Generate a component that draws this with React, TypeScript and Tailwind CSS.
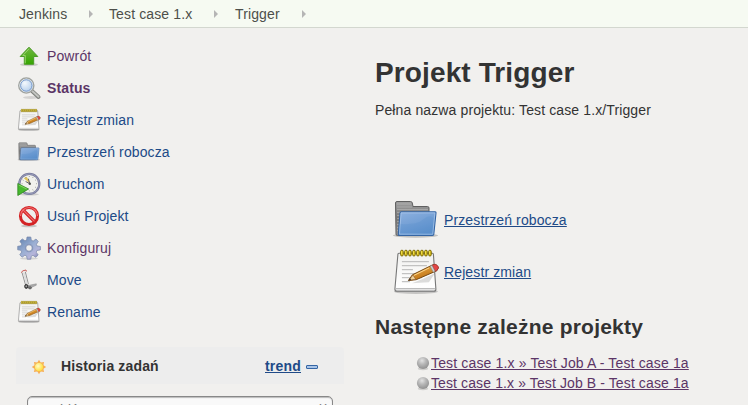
import React from "react";

type IconProps = { size?: number };

function UpArrow() {
  return (
    <svg width="24" height="24" viewBox="0 0 24 24">
      <defs>
        <linearGradient id="up" x1="0" y1="0" x2="0" y2="1"><stop offset="0" stopColor="#73b844" /><stop offset="1" stopColor="#35a500" /></linearGradient>
      </defs>
      <ellipse cx="12" cy="20.7" rx="9" ry="1.6" fill="#000" opacity=".16" />
      <path d="M12 3.2 3.2 12.5H7.3V20.3H16.7V12.5H20.8Z" fill="url(#up)" stroke="#4b9b27" strokeWidth="1" strokeLinejoin="round" />
      <path d="M12 4.9 5.8 11.5H8.3V19.3" fill="none" stroke="#a6da7a" strokeWidth=".8" />
    </svg>
  );
}

function Search() {
  return (
    <svg width="24" height="24" viewBox="0 0 24 24">
      <defs>
        <radialGradient id="lens" cx=".4" cy=".35" r=".75"><stop offset="0" stopColor="#f4f9fd" /><stop offset="1" stopColor="#a3c2e6" /></radialGradient>
      </defs>
      <ellipse cx="14" cy="21.5" rx="8" ry="1.4" fill="#000" opacity=".12" />
      <path d="m15 15 6.5 6" stroke="#7f827d" strokeWidth="3.8" strokeLinecap="round" />
      <path d="m15 14.8 6.5 5.9" stroke="#c3c5c1" strokeWidth="2" strokeLinecap="round" />
      <circle cx="9.3" cy="9.5" r="7.5" fill="url(#lens)" stroke="#a0a39f" strokeWidth="1.5" />
      <circle cx="9.3" cy="9.5" r="6.4" fill="none" stroke="#e7e9e6" strokeWidth=".9" />
      <circle cx="9.3" cy="9.5" r="5.7" fill="none" stroke="#6d92c8" strokeWidth=".9" />
    </svg>
  );
}

function Notepad({ size = 24 }: IconProps) {
  return (
    <svg width={size} height={size} viewBox="0 0 48 48">
      <defs>
        <linearGradient id="paper" x1="0" y1="0" x2="0" y2="1"><stop offset="0" stopColor="#f1f1ef" /><stop offset=".9" stopColor="#fff" /><stop offset="1" stopColor="#ccc" /></linearGradient>
        <linearGradient id="pencil" x1="0" y1="0" x2=".5" y2="1"><stop offset="0" stopColor="#f5b955" /><stop offset="1" stopColor="#ba6c0d" /></linearGradient>
      </defs>
      <g transform="translate(.9 .2)">
        <ellipse cx="23" cy="43.3" rx="22" ry="2.5" fill="#000" opacity=".18" />
        <path d="M6 5H39.5Q40.5 5 40.5 6L43 41Q43 43 41 43H4Q2 43 2 41L5 6Q5 5 6 5Z" fill="url(#paper)" stroke="#777" strokeWidth="1.1" />
        <path d="M3 40.3H42" stroke="#bbb" strokeWidth="1" />
        <path d="M9 13.5H36M9 17.5H34M9 21.5H20M9 25.5H32M9 29.5H29M9 33.5H17" stroke="#b5b5b5" strokeWidth="1" />
        {[9, 13, 17, 21, 25, 29, 33, 37].map((x) => (
          <g key={x}><rect x={x - 1.3} y="2" width="2.7" height="5.8" rx="1.3" fill="#d6bd20" stroke="#786600" strokeWidth=".9" /><path d={`M${x - 0.4} 3V6`} stroke="#fff15a" strokeWidth=".7" /></g>
        ))}
        <path d="M19 35Q30 31 42 25L36 34Z" fill="#000" opacity=".13" />
        <path d="m15.5 32.3 4-5.7L39.5 16.8Q43.5 15 45.5 19.3L44 22.5 23.3 31.5Z" fill="url(#pencil)" stroke="#784c17" />
        <path d="m20 26.8 2.8 4.2-6.8 1.1Z" fill="#edd09c" stroke="#805326" strokeWidth=".5" />
        <path d="m15.5 32.3 1.6-2.3 1.2 1.7Z" fill="#333" />
        <path d="m39.3 17 2-.8Q44.5 15.8 45.6 19.8L44 22.3 42 23.1Z" fill="#e44646" stroke="#9d3332" strokeWidth=".7" />
        <path d="m37.1 17.8 3.2 6.2 1.9-.9-3.1-6.1Z" fill="#d1d1d1" stroke="#777" strokeWidth=".5" />
        <path d="m21 27.2 15.3-7.5" stroke="#ffd98f" strokeWidth="1" />
      </g>
    </svg>
  );
}

function Folder({ size = 24 }: IconProps) {
  return (
    <svg width={size} height={size} viewBox="0 0 48 48">
      <defs>
        <linearGradient id="back" x1="0" y1="0" x2="0" y2="1"><stop offset="0" stopColor="#a0a0a0" /><stop offset=".5" stopColor="#777" /><stop offset="1" stopColor="#999" /></linearGradient>
        <linearGradient id="front" x1="0" y1="0" x2=".5" y2="1"><stop offset="0" stopColor="#8eb1df" /><stop offset="1" stopColor="#5f92cd" /></linearGradient>
      </defs>
      <ellipse cx="23.5" cy="39.5" rx="22.5" ry="2.2" fill="#000" opacity=".2" />
      <path d="M5.5 39.5Q4 39.5 4 38L3.5 7Q3.5 5.5 5 5.5H18.5Q20 5.5 20.3 7L21 10.5H35.5Q37 10.5 37 12V39Z" fill="url(#back)" stroke="#606060" />
      <path d="M5 8H19M5 11H20M5 13.5H36M5 16.5H8M5 19.5H8M5 22.5H8M5 25.5H8M5 28.5H8M5 31.5H7M5 34.5H7" stroke="#c4c4c4" strokeWidth=".8" opacity=".6" />
      <path d="M9.3 15.8H43.2Q44.1 15.8 44 17L41.8 38.2Q41.7 39.5 40.4 39.5H7.4Q6.2 39.5 6.3 38.3L8 17Q8.1 15.8 9.3 15.8Z" fill="url(#front)" stroke="#3465a4" strokeWidth="1.1" />
      <path d="M7.5 38 9.1 16.9H42.9L40.7 38.2Z" fill="none" stroke="#b7d0ef" strokeWidth=".8" opacity=".75" />
      <path d="M8.3 28Q25 29 31 23.5T41.7 22L40.3 38H7.6Z" fill="#4886c9" opacity=".18" />
    </svg>
  );
}

function Clock() {
  return (
    <svg width="24" height="24" viewBox="0 0 24 24">
      <ellipse cx="12" cy="22.3" rx="10" ry="1.3" fill="#000" opacity=".14" />
      <circle cx="12.3" cy="11.9" r="10" fill="#f1f2ed" stroke="#777a9c" strokeWidth="2.2" />
      <circle cx="12.3" cy="11.9" r="10" fill="none" stroke="#a5a8c3" strokeWidth=".7" />
      <path d="m6.8 6.2 3-1.5 3.1 6.8Z" fill="#e1c45a" />
      <path d="m12.8 11.7-4.2-2.2M12.8 11.7l-1.5-5" stroke="#555" strokeWidth=".9" />
      <circle cx="12.8" cy="11.7" r="1.2" fill="#51534f" />
      {[0, 30, 60, 90, 120, 150, 180, 210, 240, 270, 300, 330].map((a) => <path key={a} d="M12.3 4V5" stroke="#888" strokeWidth=".7" transform={`rotate(${a} 12.3 11.7)`} />)}
      <path d="M.8 11.5 11.6 17 .8 23.5Z" fill="#46b82d" stroke="#30851f" strokeWidth=".8" />
      <path d="M1.7 13 9.8 17" stroke="#9ee174" strokeWidth=".7" />
    </svg>
  );
}

function Stop() {
  return (
    <svg width="24" height="24" viewBox="0 0 24 24">
      <ellipse cx="12" cy="22" rx="8" ry="1.3" fill="#000" opacity=".18" />
      <circle cx="12" cy="12" r="8.6" fill="#eeeeec" />
      <path d="m6 6 12 12" stroke="#d42325" strokeWidth="3.2" />
      <circle cx="12" cy="12" r="8.6" fill="none" stroke="#d42325" strokeWidth="3" />
      <path d="M3.5 12a8.5 8.5 0 0 1 17 0M6.5 6.3 17.5 17.3" fill="none" stroke="#f07070" strokeWidth="1.2" />
    </svg>
  );
}

function Gear() {
  return (
    <svg width="24" height="24" viewBox="0 0 24 24">
      <defs><linearGradient id="gear" gradientUnits="userSpaceOnUse" x1="3" y1="2" x2="20" y2="22"><stop offset="0" stopColor="#6685b2" /><stop offset=".5" stopColor="#9bafd3" /><stop offset=".8" stopColor="#b6b5da" /><stop offset="1" stopColor="#8284b4" /></linearGradient></defs>
      <ellipse cx="12" cy="22.5" rx="9" ry="1.2" fill="#000" opacity=".12" />
      <g fill="url(#gear)" stroke="#7888ab" strokeWidth=".7" strokeLinejoin="round">
        <path d="M10 1H13.8L14.3 4.3 16.2 5 19 3 21.3 5.5 19.4 8.3 20.1 10 23.4 10.5V13.9L20 14.4 19.2 16.2 21.2 19 18.8 21.3 16 19.4 14.3 20.1 13.8 23.2H10.2L9.6 20 7.9 19.2 5.1 21.2 2.7 18.8 4.7 16.1 4 14.3.7 13.8V10.3L4 9.8 4.8 8 2.8 5.2 5.3 2.9 8 4.8 9.6 4.1Z" />
      </g>
      <circle cx="12" cy="12" r="4.3" fill="#8999bf" />
      <circle cx="12" cy="12" r="3.2" fill="#f1f0ee" stroke="#697da5" strokeWidth=".6" />
    </svg>
  );
}

function HandTruck() {
  return (
    <svg width="24" height="24" viewBox="0 0 24 24" fill="none">
      <path d="M5 4.5 8.7 17.3M8.3 3.8 11.4 16.2" stroke="#888" strokeWidth=".9" />
      <path d="M6.7 4.5 10 16.5" stroke="#dedede" strokeWidth="1.8" />
      <path d="m4.4 4.7 1.2-1.8 3.4-.9.4 1.5" stroke="#cb5c58" strokeWidth="1" />
      <path d="m9.8 17.8 9.5-2v1.4L12 20.5Z" fill="#aaa" stroke="#888" strokeWidth=".5" />
      <ellipse cx="9.3" cy="18.4" rx="1.6" ry="2" fill="#555" stroke="#333" />
      <ellipse cx="13" cy="19.8" rx="1.5" ry="1.1" fill="#777" stroke="#555" strokeWidth=".8" />
      <circle cx="9.2" cy="18.2" r=".6" fill="#ddd" />
    </svg>
  );
}

function Sun() {
  return (
    <svg className="mt-0.5" width="16" height="16" viewBox="0 0 16 16">
      <defs><radialGradient id="sun" cx=".4" cy=".4"><stop offset="0" stopColor="#fffcc9" /><stop offset="1" stopColor="#ffe14c" /></radialGradient></defs>
      {[0, 45, 90, 135, 180, 225, 270, 315].map((a) => <path key={a} d="M6.3 3.5 8 .8 9.7 3.5Z" fill="#f7ae55" transform={`rotate(${a} 8 8)`} />)}
      <circle cx="8" cy="8" r="4.6" fill="url(#sun)" stroke="#f5ad4a" strokeWidth=".9" />
    </svg>
  );
}

function Ball() {
  return (
    <svg className="block shrink-0" width="14" height="16" viewBox="0 0 14 16">
      <defs><radialGradient id="ball" cx=".42" cy=".3" r=".7"><stop offset="0" stopColor="#e2e2e2" /><stop offset=".45" stopColor="#b8b8b8" /><stop offset="1" stopColor="#909090" /></radialGradient></defs>
      <ellipse cx="7" cy="13.8" rx="5.2" ry="1.4" fill="#000" opacity=".14" />
      <circle cx="7" cy="8" r="6.1" fill="url(#ball)" />
    </svg>
  );
}

const tasks = [
  { icon: <UpArrow />, label: "Powrót", style: "text-[#5c3566]" },
  { icon: <Search />, label: "Status", style: "font-bold text-[#5c3566]" },
  { icon: <Notepad />, label: "Rejestr zmian", style: "text-[#204a87]" },
  { icon: <Folder />, label: "Przestrzeń robocza", style: "text-[#204a87]" },
  { icon: <Clock />, label: "Uruchom", style: "text-[#204a87]" },
  { icon: <Stop />, label: "Usuń Projekt", style: "text-[#204a87]" },
  { icon: <Gear />, label: "Konfiguruj", style: "text-[#5c3566]" },
  { icon: <HandTruck />, label: "Move", style: "text-[#204a87]" },
  { icon: <Notepad />, label: "Rename", style: "text-[#204a87]" },
];

function Crumb({ label, width }: { label: string; width: string }) {
  return (
    <li className={`flex items-center justify-between ${width}`}>
      <a>{label}</a>
      <svg width="4" height="8" viewBox="0 0 4 8"><path d="M0 0 4 4 0 8Z" fill="#b5b5b5" /></svg>
    </li>
  );
}

export default function App() {
  return (
    <div className="flex h-[405px] w-[748px] flex-col overflow-hidden bg-[#f1f0ee] font-['Liberation_Sans',Arial,sans-serif] text-[14px] leading-4 tracking-[0.12px] text-[#333] [font-kerning:normal]">
      <nav className="h-7 shrink-0 border-b border-[#d3d7cf] bg-[#f6faf2] pl-[19px] text-[#4d4f4a]">
        <ul className="flex h-[28px] items-center gap-4">
          <Crumb label="Jenkins" width="w-[74px]" />
          <Crumb label="Test case 1.x" width="mr-px w-[109px]" />
          <Crumb label="Trigger" width="w-[71px]" />
        </ul>
      </nav>
      <div className="flex min-h-0 flex-1">
        <aside className="w-[344px] shrink-0 pl-4 pt-4">
          <ul className="flex flex-col gap-2 pl-px">
            {tasks.map((t) => (
              <li key={t.label} className="flex h-6 items-center gap-1.5">
                {t.icon}
                <a className={t.style}>{t.label}</a>
              </li>
            ))}
          </ul>
          <div className="mt-[23px] flex h-[37px] items-center rounded-t bg-[#ededed] pl-[15px] pr-[26px] font-bold">
            <Sun />
            <span className="ml-[14px] tracking-[0.15px]">Historia zadań</span>
            <a className="ml-auto tracking-[0.2px] text-[#204a87] underline">trend</a>
            <span className="ml-[5px] mt-0.5 h-1 w-3 rounded-[1px] border border-[#3465a4] bg-[#a8c4e8]" />
          </div>
          <div className="ml-[11px] mt-3 flex h-8 w-[306px] justify-between rounded-[5px] border border-[#888] bg-[#f9f9f9] pl-[9px] pr-[5px] pt-[5px] text-[#777] shadow-[inset_0_1px_1px_#bbb]">
            <span>znajdź</span>
            <span className="-mt-px text-xs">X</span>
          </div>
        </aside>
        <main className="pl-[31px] pt-[29px]">
          <h1 className="text-[28px] font-bold leading-8">Projekt Trigger</h1>
          <p className="mt-[13px]">Pełna nazwa projektu: Test case 1.x/Trigger</p>
          <div className="mt-[78px] flex flex-col gap-1 pl-[17px]">
            <div className="flex h-12 items-center gap-1"><Folder size={48} /><a className="text-[#204a87] underline">Przestrzeń robocza</a></div>
            <div className="flex h-12 items-center gap-1"><Notepad size={48} /><a className="text-[#204a87] underline">Rejestr zmian</a></div>
          </div>
          <h2 className="mt-[19px] text-[21px] font-bold leading-6 tracking-[0.22px]">Następne zależne projekty</h2>
          <ul className="mt-4 flex flex-col gap-1 pl-[41px] text-[#5c3566]">
            <li className="flex h-4"><Ball /><a className="ml-px tracking-[0.15px] underline">Test case 1.x » Test Job A - Test case 1a</a></li>
            <li className="flex h-4"><Ball /><a className="ml-px tracking-[0.11px] underline">Test case 1.x » Test Job B - Test case 1a</a></li>
          </ul>
        </main>
      </div>
    </div>
  );
}
